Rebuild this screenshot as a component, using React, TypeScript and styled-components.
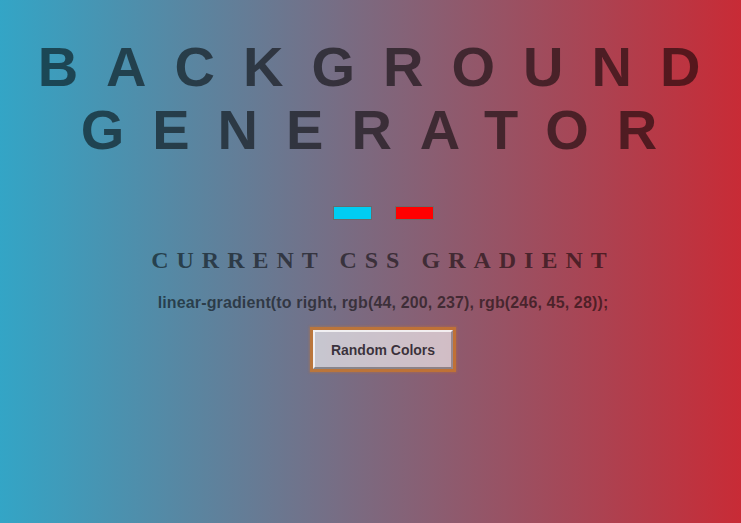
import React from "react";
import styled, { createGlobalStyle } from "styled-components";

const GlobalStyle = createGlobalStyle`
  html {
    min-height: 100%;
    background: linear-gradient(to right, #33a5c6, #c82b36);
  }
  body {
    margin: 0;
    min-height: 100vh;
    font-family: "Liberation Sans", Arial, sans-serif;
    color: rgba(0, 0, 0, 0.5);
    letter-spacing: 8px;
  }
`;

const Page = styled.main`
  display: flex;
  flex-direction: column;
  align-items: center;
  padding: 35px 8px 0 33px;
  text-align: center;
`;

const Title = styled.h1`
  margin: 0;
  font: 700 56px/63px "Liberation Sans", Arial, sans-serif;
  letter-spacing: 28px;
  text-transform: uppercase;
  color: rgba(0, 0, 0, 0.55);
  width: 100%;
`;

const Swatches = styled.div`
  display: flex;
  gap: 23px;
  margin-top: 45px;
`;

const ColorInput = styled.input`
  appearance: none;
  -webkit-appearance: none;
  box-sizing: border-box;
  width: 39px;
  height: 14px;
  padding: 0;
  margin: 0;
  border: 1px solid rgba(105, 105, 105, 0.9);
  background: none;
  cursor: pointer;
  &::-webkit-color-swatch-wrapper {
    padding: 0;
  }
  &::-webkit-color-swatch {
    border: none;
  }
`;

const Subtitle = styled.h2`
  margin: 27px 0 0;
  font: 700 24px "Liberation Serif", "Times New Roman", serif;
  letter-spacing: 8px;
  text-transform: uppercase;
  color: rgba(0, 0, 0, 0.55);
`;

const CssText = styled.h3`
  margin: 20px 0 0;
  font: 700 16px "Liberation Sans", Arial, sans-serif;
  letter-spacing: 0.14px;
  color: rgba(0, 0, 0, 0.55);
`;

const RandomButton = styled.button`
  margin-top: 18px;
  height: 39px;
  padding: 0 16px;
  font: 700 14px "Liberation Sans", Arial, sans-serif;
  letter-spacing: normal;
  color: rgba(30, 22, 35, 0.85);
  background: rgba(255, 255, 255, 0.6);
  border: 2px solid;
  border-color: rgba(255, 255, 255, 0.75) rgba(0, 0, 0, 0.28) rgba(0, 0, 0, 0.32)
    rgba(255, 255, 255, 0.75);
  box-shadow: 0 0 0 3px rgba(205, 120, 40, 0.7), 0 0 2px 4px rgba(205, 120, 40, 0.3);
  cursor: pointer;
`;

export default function App() {
  return (
    <>
      <GlobalStyle />
      <Page>
        <Title>Background Generator</Title>
        <Swatches>
          <ColorInput type="color" defaultValue="#00cdf2" aria-label="Color 1" />
          <ColorInput type="color" defaultValue="#ff0000" aria-label="Color 2" />
        </Swatches>
        <Subtitle>Current CSS Gradient</Subtitle>
        <CssText>linear-gradient(to right, rgb(44, 200, 237), rgb(246, 45, 28));</CssText>
        <RandomButton>Random Colors</RandomButton>
      </Page>
    </>
  );
}
